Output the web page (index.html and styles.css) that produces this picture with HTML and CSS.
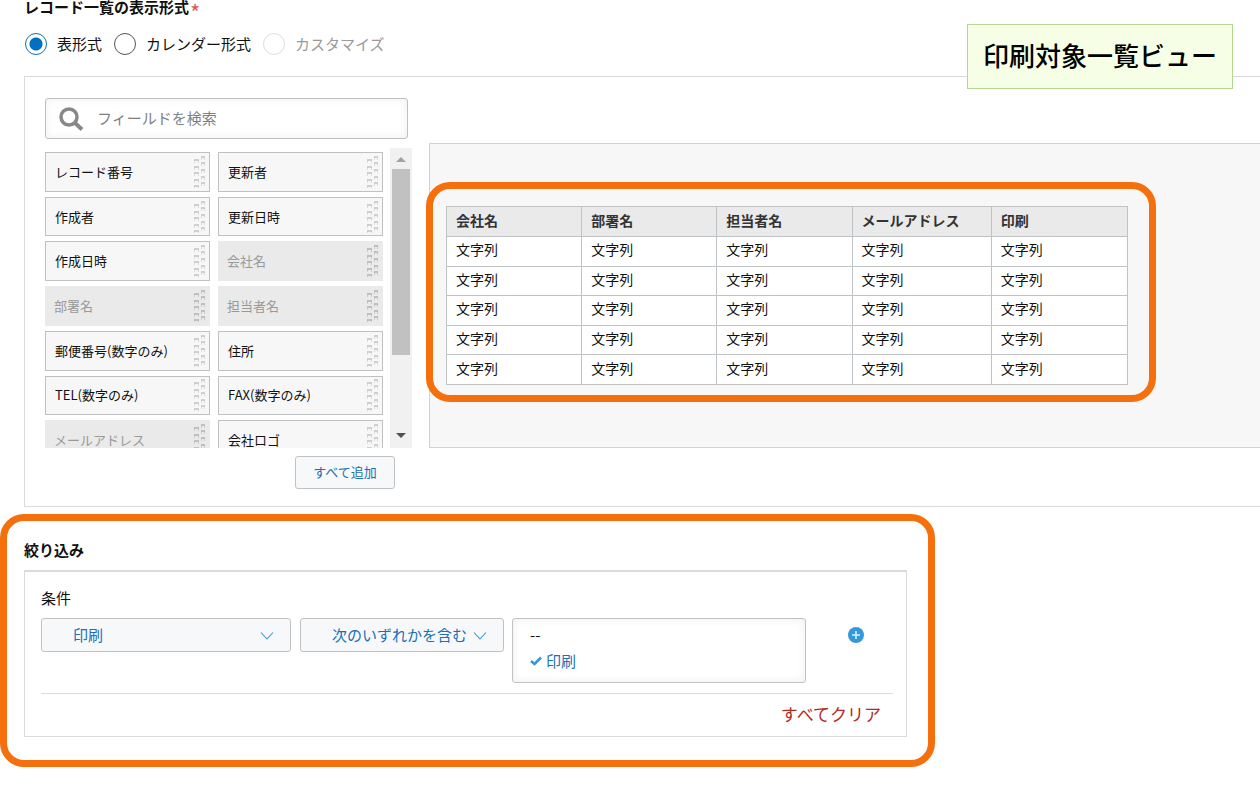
FILE: index.html
```html
<!DOCTYPE html>
<html lang="ja">
<head>
<meta charset="utf-8">
<title>レコード一覧の設定</title>
<link rel="stylesheet" href="styles.css">
</head>
<body>
<svg class="defs" aria-hidden="true">
  <symbol id="grip" viewBox="0 0 12 32">
    <g fill="none" stroke="currentColor">
      <path d="M0 4h5M0 11h5M0 17h5M0 24h5M0 30h5M7 1h4M7 7h4M7 14h4M7 21h4M7 27h4" stroke-width="1.300"/>
      <path d="M.5 4v3M4.500 4v3M.5 11v3M4.500 11v3M.5 17v3M4.500 17v3M.5 24v3M4.500 24v3M.5 30v2M4.500 30v2M7.500 1v3M10.500 1v3M7.500 7v3M10.500 7v3M7.500 14v3M10.500 14v3M7.500 21v3M10.500 21v3M7.500 27v3M10.500 27v3" opacity=".5"/>
    </g>
  </symbol>
  <symbol id="chevron" viewBox="0 0 14 10">
    <path d="M1 1.500 7 8l6-6.500" fill="none" stroke="currentColor" stroke-width="1.100"/>
  </symbol>
</svg>

<p class="badge">印刷対象一覧ビュー</p>

<main>
  <fieldset class="format">
    <legend class="title">レコード一覧の表示形式<span class="required">*</span></legend>
    <div class="radios">
      <label class="radio"><input type="radio" name="format" checked>表形式</label>
      <label class="radio"><input type="radio" name="format">カレンダー形式</label>
      <label class="radio radio-off"><input type="radio" name="format" disabled>カスタマイズ</label>
    </div>
  </fieldset>

  <section class="panel">
    <div class="picker">
      <div class="search">
        <svg class="search-icon" viewBox="0 0 25 24" aria-hidden="true"><circle cx="10" cy="10" r="8" fill="none" stroke="#888" stroke-width="3.500"/><path d="m15.500 15.500 7.500 7" stroke="#888" stroke-width="4"/></svg>
        <input type="search" placeholder="フィールドを検索" aria-label="フィールドを検索">
      </div>
      <div class="scroller">
        <ul class="fields">
          <li class="field">レコード番号<svg class="grip"><use href="#grip"/></svg></li>
          <li class="field">更新者<svg class="grip"><use href="#grip"/></svg></li>
          <li class="field">作成者<svg class="grip"><use href="#grip"/></svg></li>
          <li class="field">更新日時<svg class="grip"><use href="#grip"/></svg></li>
          <li class="field">作成日時<svg class="grip"><use href="#grip"/></svg></li>
          <li class="field used">会社名<svg class="grip"><use href="#grip"/></svg></li>
          <li class="field used">部署名<svg class="grip"><use href="#grip"/></svg></li>
          <li class="field used">担当者名<svg class="grip"><use href="#grip"/></svg></li>
          <li class="field">郵便番号(数字のみ)<svg class="grip"><use href="#grip"/></svg></li>
          <li class="field">住所<svg class="grip"><use href="#grip"/></svg></li>
          <li class="field">TEL(数字のみ)<svg class="grip"><use href="#grip"/></svg></li>
          <li class="field">FAX(数字のみ)<svg class="grip"><use href="#grip"/></svg></li>
          <li class="field used">メールアドレス<svg class="grip"><use href="#grip"/></svg></li>
          <li class="field">会社ロゴ<svg class="grip"><use href="#grip"/></svg></li>
        </ul>
        <div class="scrollbar" aria-hidden="true">
          <svg class="arrow" viewBox="0 0 22 21"><path d="m6 14 5-5 5 5z" fill="#a3a3a3"/></svg>
          <div class="thumb"></div>
          <svg class="arrow" viewBox="0 0 22 21"><path d="m6 6 5 5 5-5z" fill="#505050"/></svg>
        </div>
      </div>
      <button type="button" class="add-all">すべて追加</button>
    </div>

    <div class="canvas">
      <div class="preview">
        <table>
          <colgroup><col class="c1"><col class="c2"><col class="c3"><col class="c4"><col class="c5"></colgroup>
          <thead>
            <tr><th>会社名</th><th>部署名</th><th>担当者名</th><th>メールアドレス</th><th>印刷</th></tr>
          </thead>
          <tbody>
            <tr><td>文字列</td><td>文字列</td><td>文字列</td><td>文字列</td><td>文字列</td></tr>
            <tr><td>文字列</td><td>文字列</td><td>文字列</td><td>文字列</td><td>文字列</td></tr>
            <tr><td>文字列</td><td>文字列</td><td>文字列</td><td>文字列</td><td>文字列</td></tr>
            <tr><td>文字列</td><td>文字列</td><td>文字列</td><td>文字列</td><td>文字列</td></tr>
            <tr><td>文字列</td><td>文字列</td><td>文字列</td><td>文字列</td><td>文字列</td></tr>
          </tbody>
        </table>
      </div>
    </div>
  </section>

  <section class="filter">
    <h2 class="title">絞り込み</h2>
    <div class="filter-box">
      <h3 class="subtitle">条件</h3>
      <div class="conditions">
        <div class="select select-field">
          <select aria-label="フィールド"><option>印刷</option></select>
          <svg class="chevron" aria-hidden="true"><use href="#chevron"/></svg>
        </div>
        <div class="select select-operator">
          <select aria-label="演算子"><option>次のいずれかを含む</option></select>
          <svg class="chevron" aria-hidden="true"><use href="#chevron"/></svg>
        </div>
        <ul class="values" role="listbox" aria-multiselectable="true" aria-label="値">
          <li role="option" aria-selected="false">--</li>
          <li role="option" aria-selected="true" class="chosen"><svg class="check" viewBox="0 0 12 10" aria-hidden="true"><path d="m1 5 3.500 3L11 1.500" fill="none" stroke="#3498db" stroke-width="2.500"/></svg>印刷</li>
        </ul>
        <button type="button" class="plus" aria-label="条件を追加">
          <svg viewBox="0 0 16 16" aria-hidden="true"><circle cx="8" cy="8" r="8" fill="#3498db"/><path d="M8 4v8M4 8h8" stroke="#d9f0ff" stroke-width="1.600"/></svg>
        </button>
      </div>
      <div class="filter-foot"><a href="#" class="clear">すべてクリア</a></div>
    </div>
  </section>
</main>
</body>
</html>
```
FILE: styles.css
```css
* { box-sizing: border-box; }

body {
  margin: 0;
  background: #fff;
  color: #111;
  font: 15px/20px "Noto Sans CJK JP", sans-serif;
}

button, input, select { font: inherit; }
ul, p, h2, h3 { margin: 0; padding: 0; list-style: none; }
svg { display: block; flex: none; }
.defs { position: absolute; width: 0; height: 0; }

.badge {
  position: absolute;
  top: 24px;
  right: 27px;
  z-index: 2;
  width: 266px;
  height: 65px;
  background: #f6ffe6;
  border: 1px solid #b5d694;
  color: #000;
  font-size: 26px;
  font-weight: 500;
  line-height: 60px;
  text-align: center;
}

.title { font-size: 15px; font-weight: 700; }

/* Display format */
.format { margin: 0; padding: 0 0 0 24px; border: 0; }
.format .title { display: flex; gap: 1px; height: 14px; padding: 0; line-height: 14px; }
.required { color: #e05a50; font-size: 22px; font-weight: 400; line-height: 22px; }
.radios { display: flex; gap: 12px; padding: 19px 0 21px 1px; }
.radio { display: flex; align-items: center; gap: 10px; height: 22px; padding-bottom: 0; line-height: 20px; }
.radio input {
  appearance: none;
  width: 22px;
  height: 22px;
  margin: 0;
  border: 1px solid #555;
  border-radius: 50%;
  background: #fff;
}
.radio input:checked {
  border-color: #0b72b9;
  background: radial-gradient(circle, #0070c0 6px, #fff 7px);
}
.radio-off { color: #999; }
.radio-off input { border-color: #ddd; }

/* Field picker and table preview */
.panel {
  display: flex;
  gap: 17px;
  margin-left: 24px;
  padding: 21px 0 17px 20px;
  border: 1px solid #d8dadb;
  border-right: 0;
}
.picker { display: flex; flex-direction: column; flex: none; width: 367px; }
.search {
  display: flex;
  align-items: center;
  gap: 13px;
  height: 41px;
  margin-right: 4px;
  padding-left: 13px;
  border: 1px solid #c0c0c0;
  border-radius: 3px;
  box-shadow: inset 0 0 8px #eee;
}
.search-icon { width: 25px; height: 24px; }
.search input {
  flex: 1;
  min-width: 0;
  padding: 0 0 2px;
  border: 0;
  outline: 0;
  background: none;
  appearance: none;
}
.search input::placeholder { color: #808080; opacity: 1; }

.scroller {
  display: flex;
  justify-content: space-between;
  height: 300px;
  margin-top: 9px;
  overflow: hidden;
}
.fields {
  display: grid;
  grid-template-columns: 165px 165px;
  grid-template-rows: repeat(7, 1fr);
  gap: 5px 8px;
  height: 308px;
  margin-top: 4px;
}
.field {
  display: flex;
  align-items: center;
  justify-content: space-between;
  padding: 0 3px 0 9px;
  border: 1px solid #bfc1c3;
  background: #f7f7f7;
  font-size: 13px;
}
.field.used { border-color: #eaeaea; background: #eaeaea; color: #999; padding-left: 8px; }
.grip { width: 12px; height: 32px; color: #c4c4c4; }
.used .grip { color: #b2b2b2; }
.scrollbar {
  display: flex;
  flex-direction: column;
  width: 22px;
  background: #f1f1f1;
}
.arrow { width: 22px; height: 21px; }
.thumb { height: 186px; margin: 0 2px auto; background: #c1c1c1; }

.add-all {
  align-self: flex-end;
  width: 100px;
  height: 33px;
  margin: 8px 17px 0 0;
  padding: 0 0 2px;
  border: 1px solid #c0c2c4;
  border-radius: 3px;
  background: #f7f8f9;
  color: #1a6fb5;
  font-size: 13px;
}

.canvas {
  flex: 1;
  margin: 45px 0 41px;
  padding: 62px 132px 0 16px;
  border: 1px solid #d0d3d4;
  border-right: 0;
  background: #f7f7f7;
}
.preview { position: relative; }
.preview::after {
  content: "";
  position: absolute;
  inset: -24px -28px -17px -20px;
  border: 7px solid #f5700c;
  border-radius: 24px;
  pointer-events: none;
}
table {
  width: 100%;
  height: 179px;
  border-collapse: collapse;
  table-layout: fixed;
  background: #fff;
  font-size: 14px;
}
.c1, .c2, .c3 { width: 19.850%; }
.c4 { width: 20.450%; }
th, td {
  padding: 0 9px 4px;
  border: 1px solid #bfc3c5;
  text-align: left;
  line-height: 20px;
}
th { height: 30px; background: #eaeaea; color: #333; font-weight: 700; }

/* Filter conditions */
.filter {
  margin: 7px 325px 0 0;
  padding: 19px 21px 23px 17px;
  border: 7px solid #f5700c;
  border-radius: 24px;
}
.filter-box {
  margin-top: 10px;
  padding: 16px 13px 0 16px;
  border: 1px solid #d8dadb;
  border-top-width: 2px;
}
.subtitle { font-size: 15px; font-weight: 400; }
.conditions { display: flex; align-items: flex-start; margin-top: 10px; padding-bottom: 10px; border-bottom: 1px solid #d8dadb; }
.select { position: relative; flex: none; color: #1a6fb5; }
.select-field { width: 250px; margin-right: 9px; }
.select-operator { width: 204px; margin-right: 8px; }
.select select {
  appearance: none;
  display: block;
  width: 100%;
  height: 34px;
  padding: 0 0 1px 31px;
  border: 1px solid #c0c2c4;
  border-radius: 3px;
  background: #f7f8f9;
  color: inherit;
}
.chevron { position: absolute; top: 13px; right: 17px; width: 14px; height: 10px; color: #3498db; pointer-events: none; }
.values {
  width: 294px;
  height: 65px;
  padding: 3px 17px;
  border: 1px solid #c0c2c4;
  border-radius: 3px;
  box-shadow: inset 0 0 10px #eee;
  line-height: 26px;
}
.chosen { display: flex; align-items: center; gap: 4px; color: #1a6fb5; }
.check { width: 12px; height: 10px; }
.plus { width: 16px; height: 16px; margin: 9px 0 0 42px; padding: 0; border: 0; background: none; }
.plus svg { width: 16px; height: 16px; }
.filter-foot { padding: 8px 12px 9px 0; text-align: right; line-height: 24px; }
.clear { color: #b22a22; font-size: 17px; text-decoration: none; }
```
